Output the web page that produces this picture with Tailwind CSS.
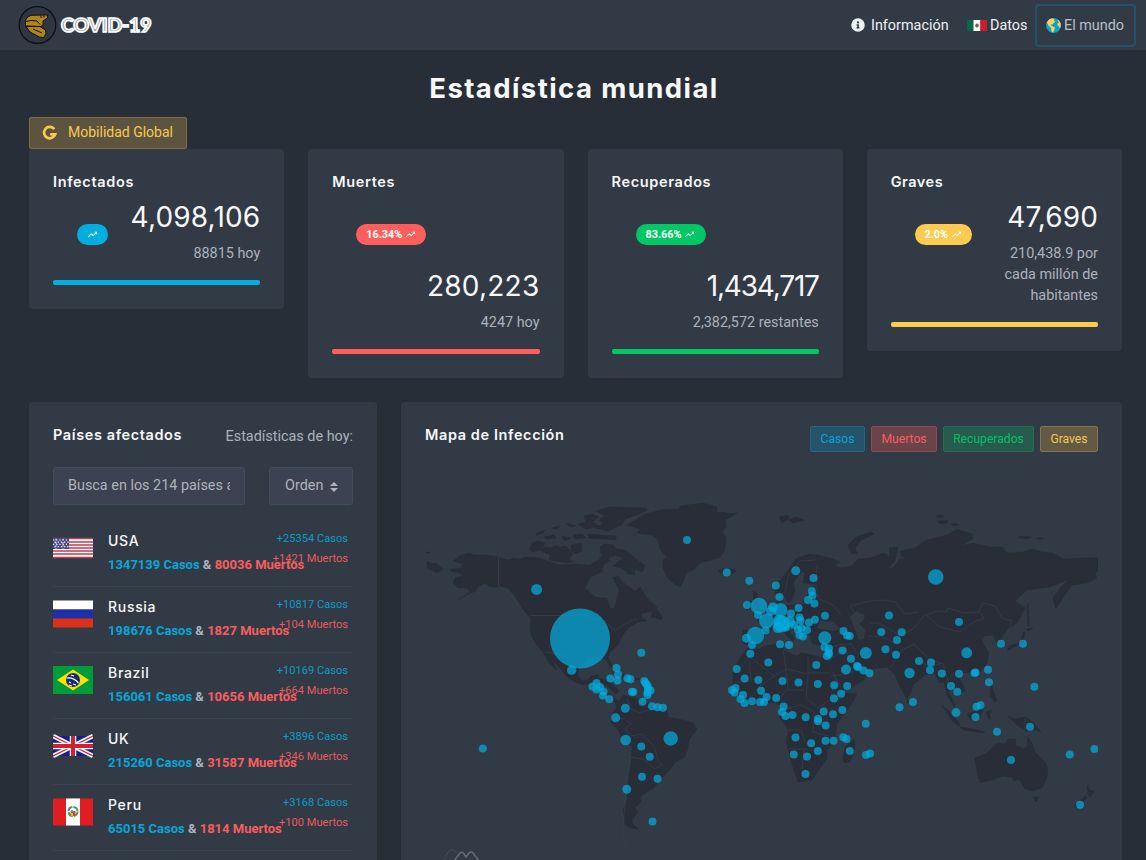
<!DOCTYPE html>
<html lang="es">
<head>
<meta charset="utf-8">
<title>COVID-19 · Estadística mundial</title>
<script src="https://cdn.jsdelivr.net/npm/@tailwindcss/browser@4"></script>
</head>
<body class="h-[860px] w-[1146px] overflow-hidden bg-[#282e38] font-[Roboto,sans-serif] text-[14.4px] leading-[21px] text-[#acb2bc]">
<svg class="hidden">
  <symbol id="trend" viewBox="0 0 24 24"><path fill="currentColor" d="M16 6l2.29 2.29-4.88 4.88-4-4L2 16.59 3.410 18l6-6 4 4 6.300-6.290L22 12V6z"/></symbol>
</svg>
<header class="flex h-[50px] items-center bg-[#323a46] pl-[18px] pr-[10px]">
  <a class="flex items-center">
    <svg class="h-[40px] w-[39px]" viewBox="18 5 39 40">
      <circle cx="37.500" cy="25" r="18.300" fill="#2f3641" stroke="#0d1014" stroke-width="1.300"/>
      <g fill="#b2841a" stroke="#11120f" stroke-width="1" stroke-linejoin="round">
        <path d="M25.500 26L25.500 20.500L27 17.500L31 15.300L47.500 15L47.500 18L43 21L43 25.500L40.500 26.500Z"/>
        <path d="M26 26.500L40 26.500L45.500 30L46 34L43.500 37.500L39.500 37L30 32Z"/>
        <path d="M26 21.500L31 20.500L37 21L40 24.500M41 15.500V18M44 15.500V17.500M33 29L42 33" fill="none"/>
      </g>
    </svg>
    <span class="ml-[4px] font-[Lato,sans-serif] text-[19.500px] font-black leading-none tracking-[-0.250px] text-[#9ba1aa] [-webkit-text-stroke:1.700px_#fff]">COVID-19</span>
  </a>
  <nav class="ml-auto flex items-center text-[#edf1f5]">
    <a class="flex items-center">
      <svg class="mr-[6px] size-[14px]" viewBox="0 0 512 512"><path fill="currentColor" d="M256 8a248 248 0 1 0 0 496 248 248 0 0 0 0-496zm0 110a42 42 0 1 1 0 84 42 42 0 0 1 0-84zm56 254a12 12 0 0 1-12 12h-88a12 12 0 0 1-12-12v-24a12 12 0 0 1 12-12h12v-64h-12a12 12 0 0 1-12-12v-24a12 12 0 0 1 12-12h64a12 12 0 0 1 12 12v100h12a12 12 0 0 1 12 12z"/></svg>
      <span class="w-[96px]">Información</span>
    </a>
    <a class="flex items-center">
      <svg class="mr-[3px] h-[11px] w-[20px]" viewBox="0 0 20 11"><path fill="#066847" d="M0 0h7v11H0z"/><path fill="#fff" d="M6.500 0h7v11h-7z"/><path fill="#ce1c29" d="M13.300 0H20v11h-6.700z"/><circle cx="10" cy="5.200" r="1.700" fill="#8a5640"/><path stroke="#3f7b49" d="M8.500 6.200q1.500 2 3 0" fill="none"/></svg>
      <span class="w-[45px]">Datos</span>
    </a>
    <a class="flex h-[43px] w-[101px] items-center rounded-[4px] border-2 border-[#225469] pl-[9px] text-[#b5c0ca]">
      <svg class="mr-[3px] size-[15px]" viewBox="0 0 15 15"><circle cx="7.500" cy="7.500" r="7.500" fill="#08a4c9"/><path fill="#fcd05b" d="M.8 4.500L3 1.600L6.500 .2L8.500 1.200L8 3L9.500 3.500L7.200 5.500L6.500 6.500L4.500 6.500L6 8L9 9.500L8.500 11.500L7 14.500L5.500 13.500L5 10L2.500 7.500zM11 1.400L13 2.600L14.800 6L14.500 9.500L13.400 10L13 8.500L11.500 7.500L11.500 5.500L13 4.500z"/></svg>
      <span>El mundo</span>
    </a>
  </nav>
</header>

<main class="px-[29px] pr-[24px]">
  <h1 class="-ml-[3px] flex h-[67px] items-center justify-center pt-[9px] font-[Inter,sans-serif] text-[27.500px] font-bold tracking-[1.420px] text-[#f7f8fa]">Estadística mundial</h1>
  <a class="flex h-[32px] w-[158px] items-center rounded-[2px] border border-[#7f6d41] bg-[#5c543f] pl-[12px] text-[14px] text-[#f8c94e]">
    <svg class="mb-px mr-[10px] size-[16px]" viewBox="0 0 16 16"><path fill="none" stroke="currentColor" stroke-width="2.700" d="M12.300 4.100A5.700 5.700 0 1 0 13.200 9.300H8.200"/></svg>
    <span class="mb-[2px]">Mobilidad Global</span>
  </a>

  <section class="grid h-[253px] grid-cols-4 items-start gap-[24px]">
    <article class="h-[160px] rounded-[4px] bg-[#323a46] px-[24px] pt-[22px]">
      <h4 class="font-[Inter,sans-serif] text-[14.5px] font-semibold tracking-[0.650px] text-[#f7f8fa]">Infectados</h4>
      <div class="flex h-[87px] justify-between pl-[24px] pt-[7px]">
        <span class="mt-[25px] flex h-[21px] w-[31px] items-center justify-center rounded-full bg-[#02aee1] text-white"><svg class="size-[11px]"><use href="#trend"/></svg></span>
        <div class="text-right"><div class="font-[Inter,sans-serif] text-[28px] leading-[36px] tracking-[0.150px] text-[#f7f8fa]">4,098,106</div><p class="mt-[8px]">88815 hoy</p></div>
      </div>
      <div class="mt-px h-[5px] rounded-[2px] bg-[#02aee1]"></div>
    </article>
    <article class="h-[229px] rounded-[4px] bg-[#323a46] px-[24px] pt-[22px]">
      <h4 class="font-[Inter,sans-serif] text-[14.5px] font-semibold tracking-[0.650px] text-[#f7f8fa]">Muertes</h4>
      <div class="h-[157px] pt-[32px]">
        <span class="ml-[24px] flex h-[21px] w-[70px] items-center justify-center gap-[3px] rounded-full bg-[#ff5f5c] text-[10.800px] font-bold text-white">16.34%<svg class="size-[11px]"><use href="#trend"/></svg></span>
        <div class="mt-[23px] text-right"><div class="font-[Inter,sans-serif] text-[28px] leading-[36px] tracking-[0.250px] text-[#f7f8fa]">280,223</div><p class="mt-[8px]">4247 hoy</p></div>
      </div>
      <div class="h-[5px] rounded-[2px] bg-[#ff5f5c]"></div>
    </article>
    <article class="h-[229px] rounded-[4px] bg-[#323a46] px-[24px] pt-[22px]">
      <h4 class="font-[Inter,sans-serif] text-[14.5px] font-semibold tracking-[0.650px] text-[#f7f8fa]">Recuperados</h4>
      <div class="h-[157px] pt-[32px]">
        <span class="ml-[24px] flex h-[21px] w-[70px] items-center justify-center gap-[3px] rounded-full bg-[#02c765] text-[10.800px] font-bold text-white">83.66%<svg class="size-[11px]"><use href="#trend"/></svg></span>
        <div class="mt-[23px] text-right"><div class="font-[Inter,sans-serif] text-[28px] leading-[36px] tracking-[-1.200px] text-[#f7f8fa]">1,434,717</div><p class="mt-[8px]">2,382,572 restantes</p></div>
      </div>
      <div class="h-[5px] rounded-[2px] bg-[#02c765]"></div>
    </article>
    <article class="h-[202px] rounded-[4px] bg-[#323a46] px-[24px] pt-[22px]">
      <h4 class="font-[Inter,sans-serif] text-[14.5px] font-semibold tracking-[0.500px] text-[#f7f8fa]">Graves</h4>
      <div class="flex h-[130px] justify-between pl-[24px] pt-[7px]">
        <span class="mt-[25px] flex h-[21px] w-[57px] items-center justify-center gap-[3px] rounded-full bg-[#fccb4f] text-[10.800px] font-bold text-white">2.0%<svg class="size-[11px]"><use href="#trend"/></svg></span>
        <div class="text-right"><div class="font-[Inter,sans-serif] text-[28px] leading-[36px] tracking-[0.100px] text-[#f7f8fa]">47,690</div><p class="mt-[8px] whitespace-nowrap">210,438.9 por<br>cada millón de<br>habitantes</p></div>
      </div>
      <div class="h-[5px] rounded-[2px] bg-[#fccb4f]"></div>
    </article>
  </section>

  <section class="flex gap-[24px]">
    <article class="h-[470px] w-[348px] shrink-0 rounded-[4px] bg-[#323a46] px-[24px] pt-[22px]">
      <div class="flex h-[43px] justify-between">
        <h4 class="font-[Inter,sans-serif] text-[14.5px] font-semibold tracking-[0.600px] text-[#f7f8fa]">Países afectados</h4>
        <span class="pt-[2px]">Estadísticas de hoy:</span>
      </div>
      <div class="flex justify-between">
        <div class="flex h-[38px] w-[192px] items-center rounded-[3px] border border-[#434c5b] bg-[#3c4251] px-[14px] pb-px"><span class="overflow-hidden whitespace-nowrap">Busca en los 214 países afectados</span></div>
        <div class="flex h-[38px] w-[84px] items-center justify-between rounded-[3px] border border-[#434c5b] bg-[#3c4251] pb-px pl-[15px] pr-[14px]">Orden<svg class="mt-[2px] h-[10px] w-[8px]" viewBox="0 0 8 10"><path fill="currentColor" d="M4 0l4 4H0zM0 6h8l-4 4z"/></svg></div>
      </div>
      <div id="countries" class="mt-[16px]"></div>
    </article>

    <article class="h-[470px] w-[721px] rounded-[4px] bg-[#323a46] px-[24px] pt-[24px]">
      <div class="flex h-[26px] items-center">
        <h4 class="mb-[10px] mr-auto font-[Inter,sans-serif] text-[14.5px] font-semibold tracking-[0.600px] text-[#f7f8fa]">Mapa de Infección</h4>
        <div class="flex gap-[6px] text-[12.150px]">
          <span class="flex h-[26px] w-[55px] items-center justify-center rounded-[2px] border border-[#1d678a] bg-[#26536a] text-[#02a4d8]">Casos</span>
          <span class="flex h-[26px] w-[66px] items-center justify-center rounded-[2px] border border-[#8f494f] bg-[#69444b] text-[#fa5d5c]">Muertos</span>
          <span class="flex h-[26px] w-[91px] items-center justify-center rounded-[2px] border border-[#20714f] bg-[#265b4e] text-[#03bf64]">Recuperados</span>
          <span class="flex h-[26px] w-[58px] items-center justify-center rounded-[2px] border border-[#86744a] bg-[#625a45] text-[#f5c650]">Graves</span>
        </div>
      </div>
      <svg class="mt-[24px] h-[384px] w-[673px] overflow-hidden" viewBox="425 476 673 384">
        <g fill="#292d38" stroke="#292d38" stroke-width=".5" stroke-linejoin="round">
          <path d="M453 561L461 555 470 553 474 555 485 555 498 557 508 560 514 558 520 559 525 557 540 558 550 562 560 565 575 564 590 565 598 560 604 563 602 572 612 578 618 576 625 584 635 591 640 587 647 598 657 607 655 611 643 613 634 620 638 622 628 628 622 636 618 645 610 652 608 657 612 665 611 668 606 660 598 657 588 658 578 668 578 676 582 681 588 680 591 676 599 675 596 681 590 684 583 685 575 682 566 676 560 668 552 660 547 653 553 662 557 670 549 663 543 652 536 644 531 635 530 628 531 619 522 608 517 599 508 588 500 587 490 587 485 583 478 587 476 591 468 594 458 600 470 592 467 588 458 588 453 583 455 578 462 576 460 573 450 571 451 569 461 568 463 564Z"/>
          <path d="M427 561l6 3 3-1 7 6-6 4-10-5zM426 552h4v1h-4zM541 551l3-4 8 1 3-3 5 2 6-1 7 8-4 5 4 3-6 1-18-3 1-5zM530 549l2-6 6-2 7 2-4 7-9 2zM536 534l9-4-2 3-7 3zM544 537l10-2 2 3-9 1zM552 528l8-2-3 3zM566 523l10 3-6 1zM562 536l9 2-7 3zM573 535l9-1 4 4-11 1zM571 545l10-2 1 8-7 3-4-3zM578 524l12-3 10 5-14 3zM584 516l8-2 7 3-5 4-8 1zM596 511l14-4 35 1 2 2-10 5-12 4-3 6-14 6-13-3 8-4-4-4 6-4zM588 534l28 2v4l-27-2zM600 547l4-3 9 1 3 4 9 1 10 8 10 8-3 6-8-3 1 6-7-1-6-6-9-2 10-8-8-3-8 4-6-5zM600 557l6-2 4 6-6 3-5-3z"/>
          <path d="M627 525L634 521 643 515 660 510 679 509 680 506 703 503 717 507 717 512 728 513 738 513 725 520 726 528 722 532 726 537 725 550 720 557 708 561 702 562 693 570 686 573 684 580 680 587 673 583 667 577 663 568 663 560 667 557 660 550 658 540 652 535 637 533 640 529Z"/>
          <path d="M718 571l5-2h11l2 3-9 3zM654 606l4 5 5 7-3 2-6-3-3 1zM635 617l6-3 1 4 5 3-9 1z"/>
          <path d="M599 678l10 3 10 10-3 3-9-8-10-5zM612 672l12 3 6 2h-7zM630 677l10 2-6 2z"/>
          <path d="M613 698L619 701 623 695 630 697 643 700 653 707 667 710 668 717 683 720 693 723 697 729 689 740 688 748 685 757 675 762 670 770 663 777 655 781 657 784 654 788 647 792 640 797 641 802 635 807 638 812 632 820 633 824 638 829 630 828 625 824 623 810 627 800 627 783 631 763 632 747 622 738 617 728 611 723 613 713 617 707Z"/>
          <path d="M748 647L755 650 770 645 782 643 783 649 793 655 798 656 800 653 808 654 820 657 827 660 835 680 840 687 845 693 857 694 853 702 845 713 837 723 835 743 827 750 827 758 820 768 812 780 798 782 794 770 789 753 786 743 788 733 787 727 779 717 782 707 775 702 763 703 751 705 743 705 733 693 733 670 740 658Z"/>
          <path d="M843 757l2-10 6-4 3-4 1 8-5 15-5 1-2-3z"/>
          <path d="M743 630L743 643 752 647 762 640 767 633 773 630 781 628 787 636 793 641 795 639 787 628 791 627 798 635 802 641 804 632 810 635 812 643 823 647 827 653 827 661 835 675 843 690 853 687 863 680 870 673 863 667 857 668 850 658 860 665 872 669 887 667 895 675 900 687 907 699 911 692 913 685 925 675 933 671 940 683 944 682 947 695 955 708 953 700 949 693 950 687 957 695 965 691 962 682 958 676 964 673 980 672 987 663 989 653 984 645 982 640 985 636 993 635 997 643 1001 645 1002 637 1007 630 1018 622 1025 608 1015 601 1027 590 1050 587 1067 580 1069 579 1060 588 1053 598 1056 609 1066 593 1072 585 1087 583 1097 578 1095 574 1098 571 1098 558 1083 558 1063 559 1053 553 1042 552 1033 549 1023 552 1007 553 1002 547 990 547 973 543 960 546 973 539 972 534 957 529 947 535 927 540 915 548 900 551 897 547 889 548 890 557 884 553 870 558 858 559 852 566 841 568 835 566 840 562 833 559 817 555 810 554 797 558 788 570 780 580 775 585 775 594 783 595 788 603 792 600 795 590 793 583 801 572 805 572 803 583 817 584 808 589 808 597 797 605 783 605 783 597 777 599 777 605 765 614 756 617 762 627 755 630Z"/>
          <path d="M753 591l4 2 1 8 6 9-3 4-8 2 4-6-3-5zM745 603l6-2 1 7-6 2zM779 517l8-2 3 3-8 5zM788 520l8-3 8 3-11 3zM848 545l8-8 15-5 3 2-13 6-6 9 3 5-7-1zM936 516l5-2 3 3-5 1zM937 521l10-1 1 3-8 1zM951 524l4-1 4 2-6 1zM1019 536l12 1-4 2-8-1zM1037 538h6v1h-6z"/>
          <path d="M1028 603l1 22-1 2-1-20zM1026 629l7-1-5 3zM1025 633l-2 9-16 9 2-5 12-4 2-10zM942 705l8 7 10 12-1 2-7-5zM960 727l13 2 12 3-1 1-21-3zM967 714l11-4 4-6 2 3-5 12-8 1zM986 712l6-2-3 4 2 5-3-1zM991 682l2 8 4 10-2 2-5-6zM1008 716l7 3 10-2 8 5 8 10-8-3-6 2-9-5z"/>
          <path d="M975 758L987 753 993 747 998 743 1005 744 1008 739 1016 739 1015 745 1023 749 1027 747 1028 737 1033 745 1035 752 1045 762 1048 768 1047 778 1042 788 1033 791 1025 789 1019 779 1014 781 1012 777 1003 776 992 780 980 783 978 777Z"/>
          <path d="M1033 797h6l-3 5zM1087 785l3 5 4 1-4 6-2-3zM1085 796l2 2-11 10-2-2zM907 698l2 4-2 1z"/>
        </g>
        <g fill="#323a46">
          <path d="M585 588l6-11 11-5 10 5 7 13-3 12-2 6h-4l-3-10-11-1zM817 628l4-8 6 2 5-1 9 8-8 2-8-1zM850 617l6-6 9 4-2 6-4 2 6 7-1 9-5 1-5-13zM799 578l3 6 15 1-10 3-2 10-3 5-8-1 2-12-1-6z"/>
          <path d="M899 545l2 12 5 1-7 1-5 8-5 1 6-7z"/>
        </g>
        <g fill="none" stroke="#3b424e" stroke-width=".8" stroke-linejoin="round" opacity=".85">
          <path d="M498.500 557v29l9 4 12 17M531 615.500h55l8 3 10 2 11 10 9-6 12-6M545 652l18 3 10 9"/>
          <path d="M627 698l3 10 9 5 13-4M613 720l11-2 7 6-6 4 5 8 12-2 12 12 4 14 4 5-7 4-12-10-13-2-3 30-3 28-2 18 4 10"/>
          <path d="M750 656l-10 12M749 656l25 20 12-7-3-20M786 669l22 5v-18M808 673h21M774 676l-14 10-8 10M735 683l16-2-2-20M786 670l2 18-8 10M808 676l-2 22 12 10 12-8 4-16M788 690l16 0M782 710l20-5 12 7-1 20 16 4M787 730l14 0 4 12 10 6M790 749l14 0-2 20M804 749l12 2 8-6"/>
          <path d="M785 593l3-17 12-15 15-1M817 565l-1 20 3 14 14 6 8 10M796 606l12-4M768 613l10 8-2 10M785 606l2 14 20 4 8-8M827 648l16-4 8 0 8 12M828 661l14-10M845 645l3 12M831 676l18-2 10-6M854 612l-4-6 20-5 15-1 10 2 10 12 12-2M926 615l11-4 9 1 2-4 16 5 15-1 4-9 12 3 7 12 10 3-4 11M926 615l14 12 20 5 14-10 10-4-4-5M925 615l-12 14-14 6-20-12-10 0M868 636l15 1 14 7M890 668l12-18 12-6 15 15 14 5 6 20M918 660l12 7 12-4M946 683l8-10M958 676l8 10M1025 718v12"/>
        </g>
        <g id="dots" fill="#02aee1" fill-opacity=".7"></g>
        <path d="M443 862c4-10 7-13 10-12l5 3" fill="none" stroke="#424850" stroke-width="1.300"/>
        <path d="M454 861l6-8q2-2 4 1l2 3 3-4q2-2 4 0l6 8" fill="none" stroke="#656c75" stroke-width="1.500"/>
      </svg>
    </article>
  </section>
</main>

<script>
const flags = {
  USA: '<path fill="#fff" d="M0 4h40v20H0z"/><path stroke="#c43a4b" stroke-width="1.500" d="M0 4.500h40M0 8h40M0 11h40M0 14h40M0 17h40M0 20h40M0 23.500h40"/><path fill="#4b4a86" d="M0 4h16v11H0z"/><path stroke="#fff" stroke-width="1.200" stroke-dasharray="1.200 2" d="M0 6h16M1.500 8.200h15M0 10.400h16M1.500 12.600h15M3 5v10M10 5v10"/>',
  Russia: '<path fill="#fff" d="M0 .500h40v9H0z"/><path fill="#1b2fa8" d="M0 9.500h40v9H0z"/><path fill="#da301c" d="M0 18.500h40v9H0z"/>',
  Brazil: '<path fill="#009b3a" d="M0 0h40v28H0z"/><path fill="#fedf00" d="M4 14L20 3.500 36 14 20 24.500z"/><circle cx="20" cy="14" r="7" fill="#112c7a"/><path d="M13.500 12q7-1 12 5M16 16l2 1M20 18l3 1M18 9l3 1M16 19l3 1" stroke="#fff" stroke-width="1.200" fill="none"/>',
  UK: '<path fill="#12208a" d="M0 4h40v20H0z"/><path d="M0 4l40 20M40 4L0 24" stroke="#fff" stroke-width="4.500"/><path d="M0 4l40 20M40 4L0 24" stroke="#d81e2c" stroke-width="1.300"/><path d="M20 4v20M0 14h40" stroke="#fff" stroke-width="6.500"/><path d="M20 4v20M0 14h40" stroke="#d81e2c" stroke-width="4"/>',
  Peru: '<path fill="#e01e22" d="M0 .500h40v27H0z"/><path fill="#fff" d="M13 .500h14v27H13z"/><circle cx="20" cy="13.500" r="4.500" fill="none" stroke="#4a9a5c" stroke-width="2" stroke-dasharray="6 1"/><path fill="#d8453a" d="M17.500 13h5v5h-5z"/><path fill="#e2b637" d="M18 15h2v3h-2z"/><path fill="#5ba9cc" d="M18 12h2v2h-2z"/>'
};
const rows = [
  ['USA', '1347139', '80036', '+25354', '+1421'],
  ['Russia', '198676', '1827', '+10817', '+104'],
  ['Brazil', '156061', '10656', '+10169', '+664'],
  ['UK', '215260', '31587', '+3896', '+346'],
  ['Peru', '65015', '1814', '+3168', '+100']
];
document.getElementById('countries').innerHTML = rows.map(([name, cases, deaths, newCases, newDeaths]) => `
  <div class="relative flex h-[66px] border-b border-[#3c4350]">
    <svg class="mt-[13px] h-[28px] w-[40px] overflow-hidden" viewBox="0 0 40 28">${flags[name]}</svg>
    <div class="ml-[15px] whitespace-nowrap">
      <h5 class="mt-[9px] font-[Inter,sans-serif] text-[14px] font-medium tracking-[0.700px] text-[#f7f8fa]">${name}</h5>
      <p class="mt-[4px] text-[13px] font-bold leading-[20px]"><span class="text-[#02a8da]">${cases} Casos</span> &amp; <span class="text-[#fa5d5c]">${deaths} Muertos</span></p>
    </div>
    <div class="absolute right-[5px] top-[8px] text-right text-[11.1px] leading-[20px]"><p class="text-[#0c9cc7]">${newCases} Casos</p><p class="text-[#e65a5b]">${newDeaths} Muertos</p></div>
  </div>`).join('');

const dots = [
  [580,638.5,30],[536.6,589.4,5.5],[571.7,670.3,4.7],[687,540],[726.800,572.500],[749.300,580.800],[641.300,652.700],[482.800,748.500],
  [616.500,668],[618,674.500],[617.500,680.500],[610.300,678.500],[627.500,678.200],[630.500,679.300],[596.500,683],[592.500,686.500],[600,687],[596.500,689.500],[603.500,691.500],[603,695.500],[609.300,699.300],
  [632,691.800],[633.300,692],[644.300,681],[645.500,683],[647,685],[648,687],[648,689.500],[650.500,690.500],[647.500,692.500],[647.500,695],[642.500,701.800],[652,706.200],[657.500,707.300],[663,707.800],
  [625.300,708.300,4.5],[615.700,717.800,4.5],[625.700,740,5.3],[670.700,738.500,7.2],[641.300,746.600],[649.800,756.700],[642,776.800],[657.500,778.800],[626.800,789.200,4.5],[652.500,821.600],
  [795.800,570.800,4.5],[813.500,578],[775.800,585.600],[779.500,597],[811.800,591],[812.500,595.500],[808,600],[814.400,603.500],[747,605],[759,606,8.3],[758,615],[773,607.500,5],[771,611,5],[780.500,610,7],[798.500,608],[791,613.500],[766.500,621,7.5],[779.500,620.500,6],[781.800,624,8.5],[778,627.500,5.5],[789.500,621.500,5.5],[786,627.500],[799.500,617.500],[800.500,620.500],[809,622.500],[815,619.800],[825,615.800],[755.500,635.500,8.7],[746.500,638.300,4.5],[765.500,630.500],[752,645],[807,630],[801.500,628],[798,629.500],[794,625],[799.500,635],[803,636.500],[824.800,637.800,6.6],[780,644.300],[789,645],[750.300,653.700],[843.500,631],[847,635.500],[849.800,636],
  [824.500,647],[829,648.500],[829,654],[827,656],[828.500,652.500],[842.500,650.500],[851,658.800],[865.800,653,6],[846,669.500,5],[857,666],[858,667],[863.500,670.500],[869.500,673.300],[816.300,665],[768.300,662.500],[736.700,669],[744.600,678.500],[758.300,680],[782.500,681],[798.500,682.500],[817.800,684],[834.200,685.200],[847.200,686],[841.200,693.800],[834,698.500],[735.500,688],[732,690],[734.500,692.500],[743,695],[740.500,699],[744.500,703],[752,701.300],[761,690.800],[760,702],[764,702],[766.500,697],[776.200,698],[783.600,706.500],[782,712],[785.500,716],[792.500,715],[805.700,717.200],[818,718.800],[818,721.300],[823.700,711.500],[833,714.300],[842.400,710],[825.700,725.500],[795.500,737.500],[811.200,743.200],[825.500,740.700],[833.500,740.700],[843.300,737.300],[846.500,739],[865.800,723.800],[849.800,751],[866,755],[870,753.600],[793.800,754.500],[807,756.500],[817.900,751],[805.500,774],
  [889,615.600],[881.300,632],[901.700,632.300],[897,640],[885.500,649.300],[896,654.800],[935.800,577,7.8],[959,622],[966.700,652.800,5.5],[919,661],[931,662.500],[930,670],[909.500,673,5.2],[941.800,673.500],[959,673.800],[974.500,673],[975.500,672.500],[988,669.800],[1001,643.800],[1023,643.800],[989,682.200],[1034.300,686.700],[951,686],[957.300,691.700],[899.500,707.200],[913,702],[956,712.600,4.5],[976.500,706.800],[980.500,705.300],[975.500,717],[997,731.700],[1030,726.700],[1011,760],[1069.800,754.600],[1094.500,749],[1080,804.700]
];
document.getElementById('dots').innerHTML = dots.map(([x, y, r = 4]) => `<circle cx="${x}" cy="${y}" r="${r}"/>`).join('');
</script>
</body>
</html>
